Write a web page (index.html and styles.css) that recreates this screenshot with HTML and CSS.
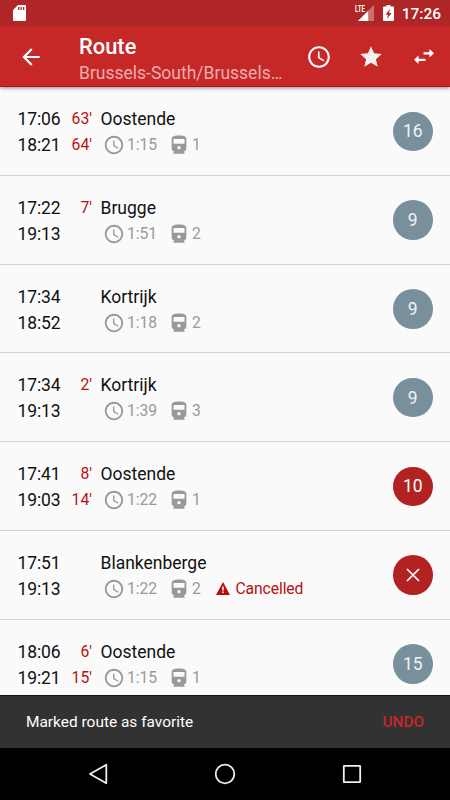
FILE: index.html
```html
<!DOCTYPE html>
<html lang="en">
<head>
<meta charset="utf-8">
<title>Route</title>
<link rel="stylesheet" href="styles.css">
</head>
<body>
<svg class="defs" width="0" height="0">
  <symbol id="clock" viewBox="0 0 24 24"><path d="M11.99 2C6.47 2 2 6.48 2 12s4.47 10 9.99 10C17.52 22 22 17.52 22 12S17.52 2 11.99 2zM12 20c-4.42 0-8-3.58-8-8s3.58-8 8-8 8 3.58 8 8-3.58 8-8 8zm.5-13H11v6l5.25 3.15.75-1.23-4.5-2.67z"/></symbol>
  <symbol id="train" viewBox="0 0 24 24"><path d="M12 1.500c-4 0-8 .5-8 4V15.500c0 1.900 1.300 3.300 3 3.600L6 20.200v1.300h12v-1.300L17 19.100c1.700-.3 3-1.700 3-3.600V5.500c0-3.500-4-4-8-4zm0 15.200c-1 0-1.800-.8-1.800-1.800s.8-1.800 1.800-1.800 1.800.8 1.800 1.800-.8 1.800-1.800 1.800zM18 10.500H6V5.500h12z"/></symbol>
</svg>
<div class="screen">
  <header>
    <div class="statusbar">
      <svg class="sd" viewBox="0 0 13 16"><path d="M5 0h7a1 1 0 0 1 1 1v14a1 1 0 0 1-1 1H1a1 1 0 0 1-1-1V5zM5 2v3h1.300V2zm2.500 0v3h1.300V2zM10 2v3h1.300V2z" fill-rule="evenodd"/></svg>
      <div class="signal">
        <svg viewBox="0 0 16 16"><path d="M16 0v16H0z" opacity=".35"/><path d="M10.200 5.800V16H0z"/></svg>
        <span>LTE</span>
      </div>
      <svg class="battery" viewBox="0 0 11 16"><path fill-rule="evenodd" d="M3.500 0h4v1.500H10a1 1 0 0 1 1 1V15a1 1 0 0 1-1 1H1a1 1 0 0 1-1-1V2.500a1 1 0 0 1 1-1h2.500zM7 3.700 2.500 9.700H5L4 14l4.500-6H6z"/></svg>
      <span class="now">17:26</span>
    </div>
    <div class="toolbar">
      <svg class="back" viewBox="0 0 24 24"><path d="M20 11H7.830l5.590-5.590L12 4l-8 8 8 8 1.410-1.410L7.830 13H20z"/></svg>
      <div class="titles"><h1>Route</h1><p>Brussels-South/Brussels…</p></div>
      <svg class="action" viewBox="0 0 24 24"><use href="#clock"/></svg>
      <svg class="action star" viewBox="0 0 24 24"><path d="M12 17.270 18.180 21l-1.640-7.030L22 9.240l-7.190-.61L12 2 9.190 8.630 2 9.240l5.460 4.730L5.820 21z"/></svg>
      <svg class="action swap" viewBox="0 0 20 15"><path d="M15.500 0l4.500 4.200-4.500 4.300V5.400H9.500V3.200h6zM4.500 6.500 0 10.800 4.500 15v-3.100h7V9.700h-7z"/></svg>
    </div>
  </header>
  <main id="list"></main>
  <div class="snackbar"><span>Marked route as favorite</span><button>UNDO</button></div>
  <nav>
    <svg viewBox="0 0 22 22"><path d="M18.300 1.800v18.400L2 11z"/></svg>
    <svg viewBox="0 0 22 22"><circle cx="11" cy="11" r="9.300"/></svg>
    <svg viewBox="0 0 22 22"><rect x="2.800" y="2.800" width="16.400" height="16.400" rx=".5"/></svg>
  </nav>
</div>
<script src="app.js"></script>
</body>
</html>
```
FILE: styles.css
```css
* { box-sizing: border-box; margin: 0; padding: 0; }
body { width: 450px; height: 800px; overflow: hidden; font-family: Roboto, sans-serif; background: #fafafa; }
svg { display: block; flex: none; }
.defs { position: absolute; }
.screen { width: 450px; height: 800px; display: flex; flex-direction: column; }
header { height: 87px; flex: none; background: #c62828; border-bottom: 1px solid #b90f0f; box-shadow: 0 1px 4px rgba(0,0,0,.45); z-index: 1; color: #fff; }
header svg { fill: #fff; }
.statusbar { height: 26px; background: #b02525; display: flex; align-items: center; padding: 0 9px 0 13px; }
.sd { width: 13px; height: 16px; }
.signal { position: relative; margin-left: auto; width: 20px; height: 16px; padding-left: 4px; }
.signal svg { width: 16px; height: 16px; }
.signal span { position: absolute; left: 1px; top: 0; font: 700 8.500px/8px Roboto, sans-serif; transform: scaleX(.72); transform-origin: left; background: #b02525; padding-right: 1px; }
.battery { width: 11px; height: 16px; margin: 0 8px 0 9px; }
.now { font-size: 15.500px; font-weight: 500; line-height: 26px; padding-top: 1px; }
.toolbar { height: 60px; display: flex; align-items: center; padding: 1px 0 0 18px; }
.back { width: 26px; height: 26px; }
.titles { width: 210px; margin-left: 35px; padding-top: 6px; }
h1 { font-size: 21.900px; font-weight: 500; line-height: 27px; }
.titles p { font-size: 17.500px; line-height: 26px; color: #eeadad; white-space: nowrap; }
.action { width: 26px; height: 26px; margin-left: 17px; }
.action.star { margin-left: 26px; opacity: .93; }
.action.swap { width: 20px; height: 15px; margin-left: 30px; }
main { flex: 1; min-height: 0; overflow: hidden; color: #111; }
.row { height: 88.750px; padding: 19px 17.500px 0 17.500px; display: flex; border-bottom: 1px solid #d2d2d2; font-size: 17.500px; line-height: 26px; }
.times { width: 44px; letter-spacing: -.12px; }
.delays { width: 30.500px; text-align: right; font-size: 15.700px; color: #b71010; }
.delays div { height: 26px; }
.info { margin-left: 8.500px; flex: 1; }
.meta { display: flex; align-items: center; height: 26px; font-size: 15.700px; letter-spacing: -.1px; color: #999; }
.meta svg { width: 22px; height: 22px; fill: #999; }
.meta .clock { margin-left: 2.500px; }
.meta span { width: 41px; margin-left: 2px; }
.meta .changes { width: 10px; margin-left: 2px; }
.meta .warn { width: 14px; height: 13px; margin-left: 13.500px; fill: #b71010; }
.meta .cancelled { width: auto; margin-left: 6px; color: #b71010; }
.badge { width: 39.500px; height: 39.500px; margin-top: 5.500px; border-radius: 50%; background: #78909c; color: #eef2f4; display: flex; align-items: center; justify-content: center; }
.badge.alert { background: #b22222; color: #fff; }
.badge svg { width: 14px; height: 14px; stroke: #fff; stroke-width: 1.700; }
.snackbar { height: 53px; flex: none; background: #323232; border-top: 1px solid #111; display: flex; justify-content: space-between; align-items: center; padding: 0 26px; color: #fff; font-size: 15.450px; }
.snackbar button { border: 0; background: none; color: #c62828; font: 500 15.300px Roboto, sans-serif; }
nav { height: 52px; flex: none; background: #000; display: flex; justify-content: center; align-items: center; gap: 104.500px; }
nav svg { width: 22px; height: 22px; fill: none; stroke: #eee; stroke-width: 1.800; stroke-linejoin: round; }
```
FILE: app.js
```js
const trips = [
  ["17:06", "18:21", "63'", "64'", "Oostende", "1:15", 1, "16"],
  ["17:22", "19:13", "7'", "", "Brugge", "1:51", 2, "9"],
  ["17:34", "18:52", "", "", "Kortrijk", "1:18", 2, "9"],
  ["17:34", "19:13", "2'", "", "Kortrijk", "1:39", 3, "9"],
  ["17:41", "19:03", "8'", "14'", "Oostende", "1:22", 1, "10", "alert"],
  ["17:51", "19:13", "", "", "Blankenberge", "1:22", 2, "", "alert"],
  ["18:06", "19:21", "6'", "15'", "Oostende", "1:15", 1, "15"]
];
const cross = '<svg viewBox="0 0 14 14"><path d="M1 1l12 12M13 1L1 13"/></svg>';
const warning = '<svg class="warn" viewBox="0 0 14 13"><path fill-rule="evenodd" d="M7 0l7 13H0zM6.200 4.500v4h1.600v-4zm0 5v1.600h1.600V9.500z"/></svg><span class="cancelled">Cancelled</span>';
document.getElementById("list").innerHTML = trips.map(([dep, arr, d1, d2, to, dur, n, platform, state = ""]) => `
  <div class="row">
    <div class="times"><div>${dep}</div><div>${arr}</div></div>
    <div class="delays"><div>${d1}</div><div>${d2}</div></div>
    <div class="info"><div>${to}</div>
      <div class="meta"><svg class="clock"><use href="#clock"/></svg><span>${dur}</span><svg><use href="#train"/></svg><span class="changes">${n}</span>${platform ? "" : warning}</div>
    </div>
    <div class="badge ${state}">${platform || cross}</div>
  </div>`).join("");
```
